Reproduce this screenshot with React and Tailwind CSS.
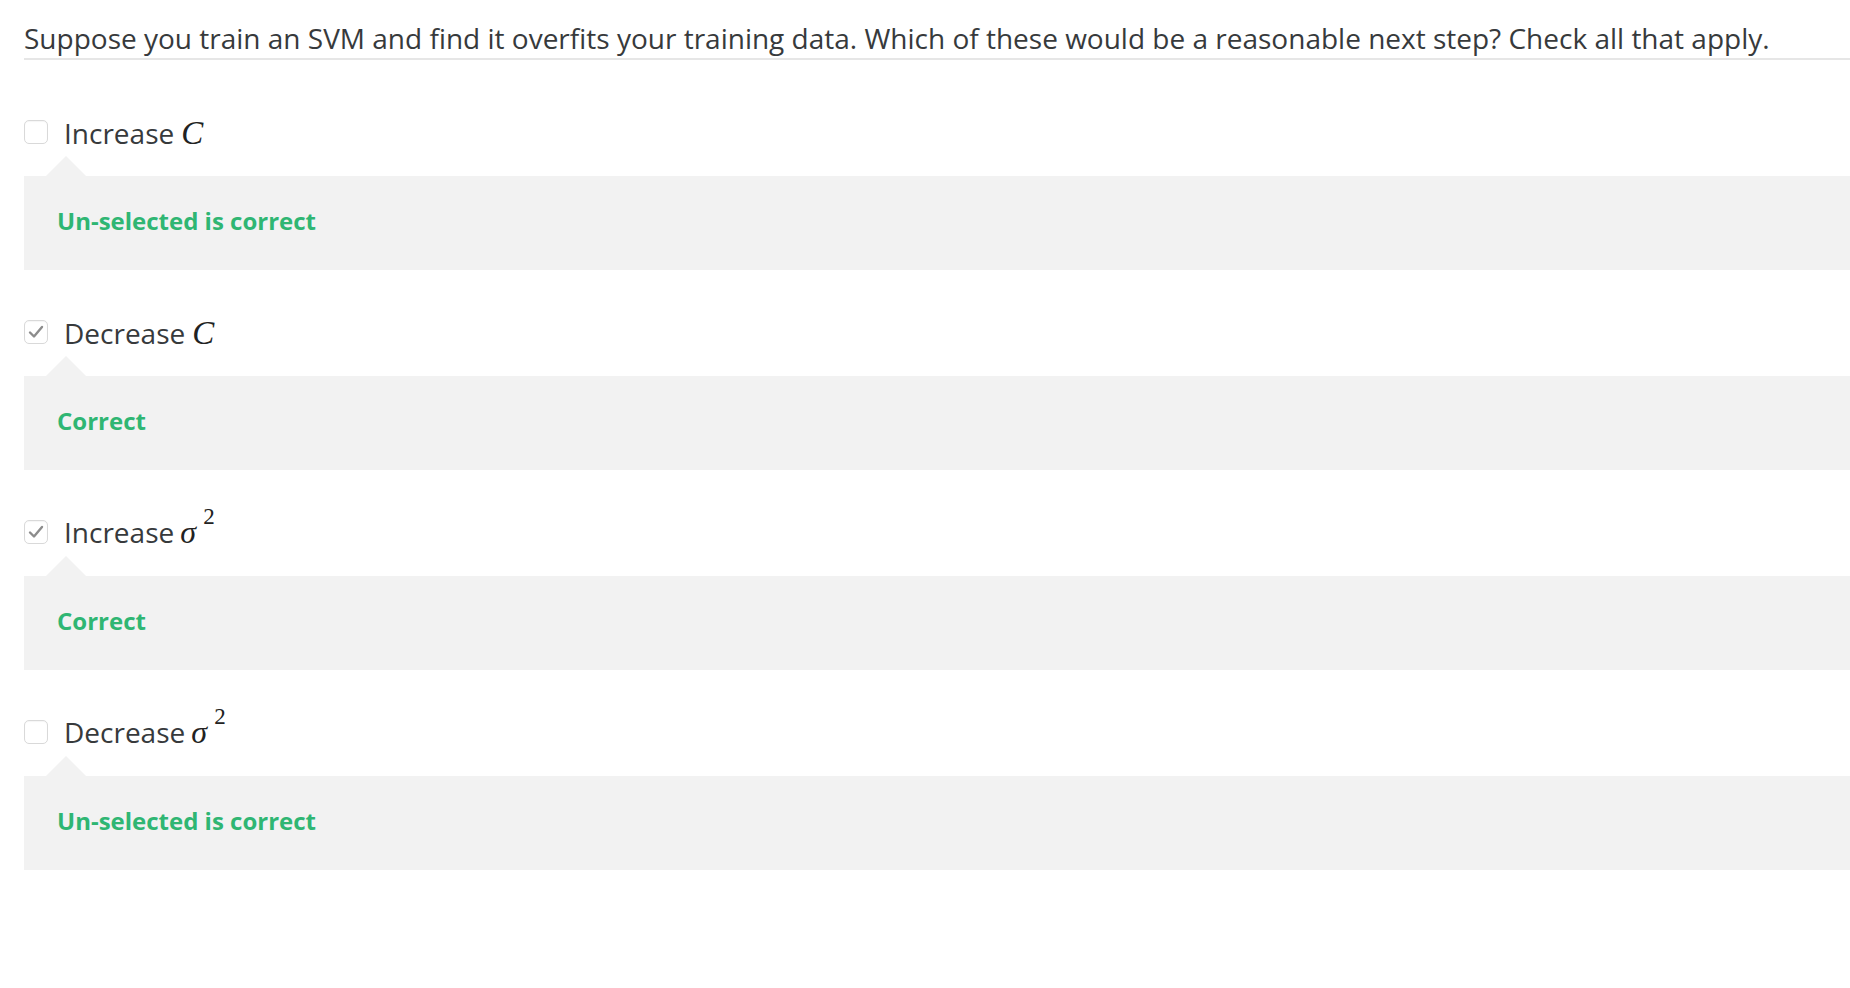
import React from 'react';

const options = [
  { verb: 'Increase', math: 'C', checked: false, feedback: 'Un-selected is correct' },
  { verb: 'Decrease', math: 'C', checked: true, feedback: 'Correct' },
  { verb: 'Increase', math: 'sigma', checked: true, feedback: 'Correct' },
  { verb: 'Decrease', math: 'sigma', checked: false, feedback: 'Un-selected is correct' },
];

function Box({ checked }) {
  return (
    <span className="w-[24px] h-[24px] shrink-0 rounded-[5px] border border-[#d9d9d9] bg-white flex items-center justify-center shadow-[inset_0_1px_1px_rgba(0,0,0,0.04)]">
      {checked && (
        <svg width="20" height="20" viewBox="0 0 20 20" fill="none">
          <path d="M4 10.5 L8 14.5 L16 5" stroke="#8c8c8c" strokeWidth="2.4" strokeLinecap="round" strokeLinejoin="round" />
        </svg>
      )}
    </span>
  );
}

function MathPart({ math }) {
  if (math === 'C') {
    return <span className="ml-[7px] italic text-[33px] text-[#222]" style={{ fontFamily: '"Liberation Serif", serif' }}>C</span>;
  }
  return (
    <span className="ml-[6px] text-[#222] relative" style={{ fontFamily: '"Liberation Serif", serif' }}>
      <span className="italic text-[32px]">σ</span>
      <span className="absolute left-[23px] -top-[15px] text-[23px]">2</span>
    </span>
  );
}

export default function App() {
  return (
    <div className="min-h-screen bg-white pl-[24px] text-[#373a3c]" style={{ fontFamily: '"Open Sans", sans-serif' }}>
      <div className="pt-[22px] pb-[4px] border-b-2 border-[#e6e6e6] text-[28px] leading-[32px]">
        Suppose you train an SVM and find it overfits your training data. Which of these would be a reasonable next step? Check all that apply.
      </div>

      <div className="pt-[60px]">
        {options.map((o, i) => (
          <div key={i} className="mb-[50px]">
            <label className="flex items-center h-[24px]">
              <Box checked={o.checked} />
              <span className="ml-[16px] text-[28px] leading-[24px] flex items-baseline mt-[2px]">
                {o.verb}
                <MathPart math={o.math} />
              </span>
            </label>
            <div className="relative mt-[32px] h-[94px] bg-[#f2f2f2] flex items-center pl-[33px]">
              <span className="absolute left-[22px] -top-[20px] w-0 h-0 border-l-[20px] border-r-[20px] border-b-[20px] border-l-transparent border-r-transparent border-b-[#f2f2f2]" />
              <span className="text-[24px] font-bold text-[#2fb673] mb-[4px]">{o.feedback}</span>
            </div>
          </div>
        ))}
      </div>
    </div>
  );
}
